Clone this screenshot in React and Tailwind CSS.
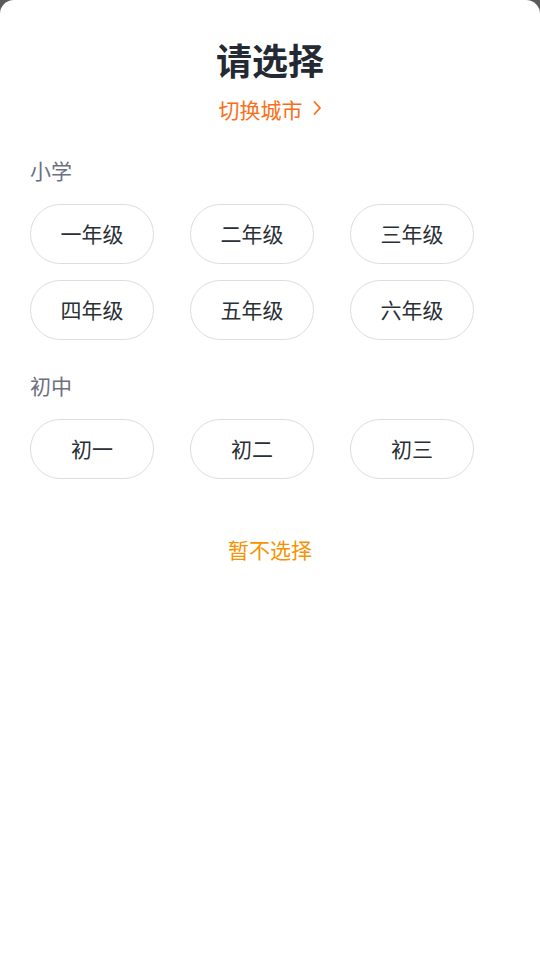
import React from "react";

const font = { fontFamily: '"Noto Sans CJK SC", "Noto Sans", sans-serif' };

function Btn({ children }) {
  return (
    <button className="w-[124px] h-[60px] rounded-full border border-[#dcdde2] bg-white text-[21px] leading-[28px] text-[#2b2f36] flex items-center justify-center pb-[2px]">
      {children}
    </button>
  );
}

export default function App() {
  return (
    <div className="w-[540px] h-[960px] bg-[#5a5a5a]" style={font}>
      <div className="h-full bg-white rounded-t-[14px] flex flex-col">
        <div className="pt-[35px] text-center text-[36px] leading-[48px] font-bold text-[#242a33]">请选择</div>
        <div className="mt-[11px] flex items-center justify-center gap-[9px] text-[21px] leading-[30px] text-[#fb6d17]">
          <span>切换城市</span>
          <svg width="10" height="16" viewBox="0 0 10 16" fill="none" stroke="#fb6d17" strokeWidth="1.8" strokeLinecap="round" strokeLinejoin="round" className="mt-[-2px]">
            <path d="M2.5 2 L8 8 L2.5 14" />
          </svg>
        </div>

        <div className="px-[30px] mt-[32px]">
          <div className="text-[21px] leading-[28px] text-[#6b7080]">小学</div>
          <div className="mt-[20px] grid grid-cols-[124px_124px_124px] gap-x-[36px] gap-y-[16px]">
            <Btn>一年级</Btn>
            <Btn>二年级</Btn>
            <Btn>三年级</Btn>
            <Btn>四年级</Btn>
            <Btn>五年级</Btn>
            <Btn>六年级</Btn>
          </div>

          <div className="mt-[31px] text-[21px] leading-[28px] text-[#6b7080]">初中</div>
          <div className="mt-[20px] grid grid-cols-[124px_124px_124px] gap-x-[36px] gap-y-[16px]">
            <Btn>初一</Btn>
            <Btn>初二</Btn>
            <Btn>初三</Btn>
          </div>
        </div>

        <div className="mt-[56px] text-center text-[21px] leading-[28px] text-[#f79200]">暂不选择</div>
      </div>
    </div>
  );
}
